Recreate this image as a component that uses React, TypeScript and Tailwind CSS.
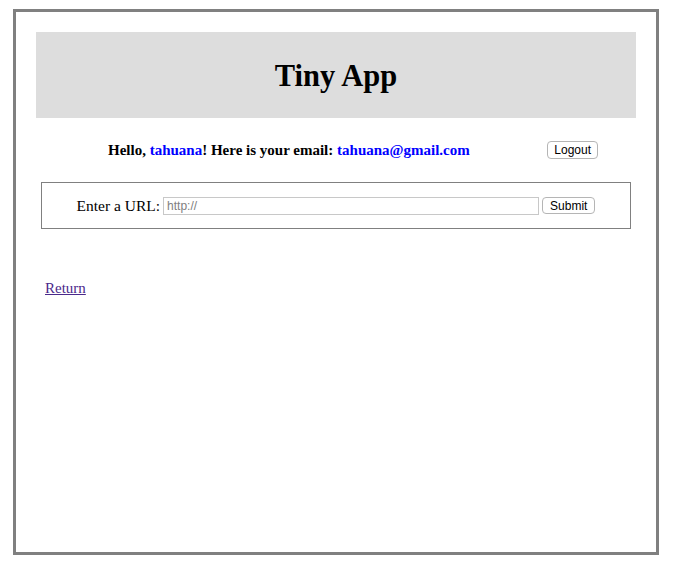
import React from 'react';

export default function App() {
  return (
    <div className="bg-white w-[673px] h-[567px] pt-[9px] pl-[13px] font-['Liberation_Serif',serif] text-black">
      <div className="w-[646px] h-[546px] border-[3px] border-[#808080] px-[20px] pt-[20px]">
        {/* Header */}
        <header className="h-[86px] bg-[#dddddd] flex items-center justify-center">
          <h1 className="text-[30.5px] font-bold leading-none pt-[3px]">Tiny App</h1>
        </header>

        {/* Greeting */}
        <div className="flex items-center h-[32px] mt-[16px]">
          <p className="ml-[72px] text-[15px] font-bold whitespace-nowrap">
            Hello, <span className="text-[#0000ff]">tahuana</span>! Here is your email:{' '}
            <span className="text-[#0000ff]">tahuana@gmail.com</span>
          </p>
          <button className="ml-auto mr-[38px] h-[18px] px-[6px] border border-[#b5b5b5] rounded-[4px] bg-white text-[12px] leading-none font-['Liberation_Sans',sans-serif]">
            Logout
          </button>
        </div>

        {/* URL form */}
        <form
          className="mt-[16px] mx-[5px] h-[47px] border border-[#808080] flex items-center justify-center gap-[3px]"
          onSubmit={(e) => e.preventDefault()}
        >
          <label className="text-[15.5px] whitespace-nowrap">Enter a URL:</label>
          <input
            type="text"
            placeholder="http://"
            className="w-[376px] h-[18px] border border-[#c8c8c8] px-[3px] text-[12px] font-['Liberation_Sans',sans-serif] placeholder:text-[#808080] outline-none"
          />
          <button className="h-[17px] px-[7px] border border-[#b5b5b5] rounded-[4px] bg-white text-[12px] leading-none font-['Liberation_Sans',sans-serif]">
            Submit
          </button>
        </form>

        <div className="mt-[47px] ml-[9px]">
          <a href="#" className="text-[15px] text-[#4b2a8b] underline">Return</a>
        </div>
      </div>
    </div>
  );
}
